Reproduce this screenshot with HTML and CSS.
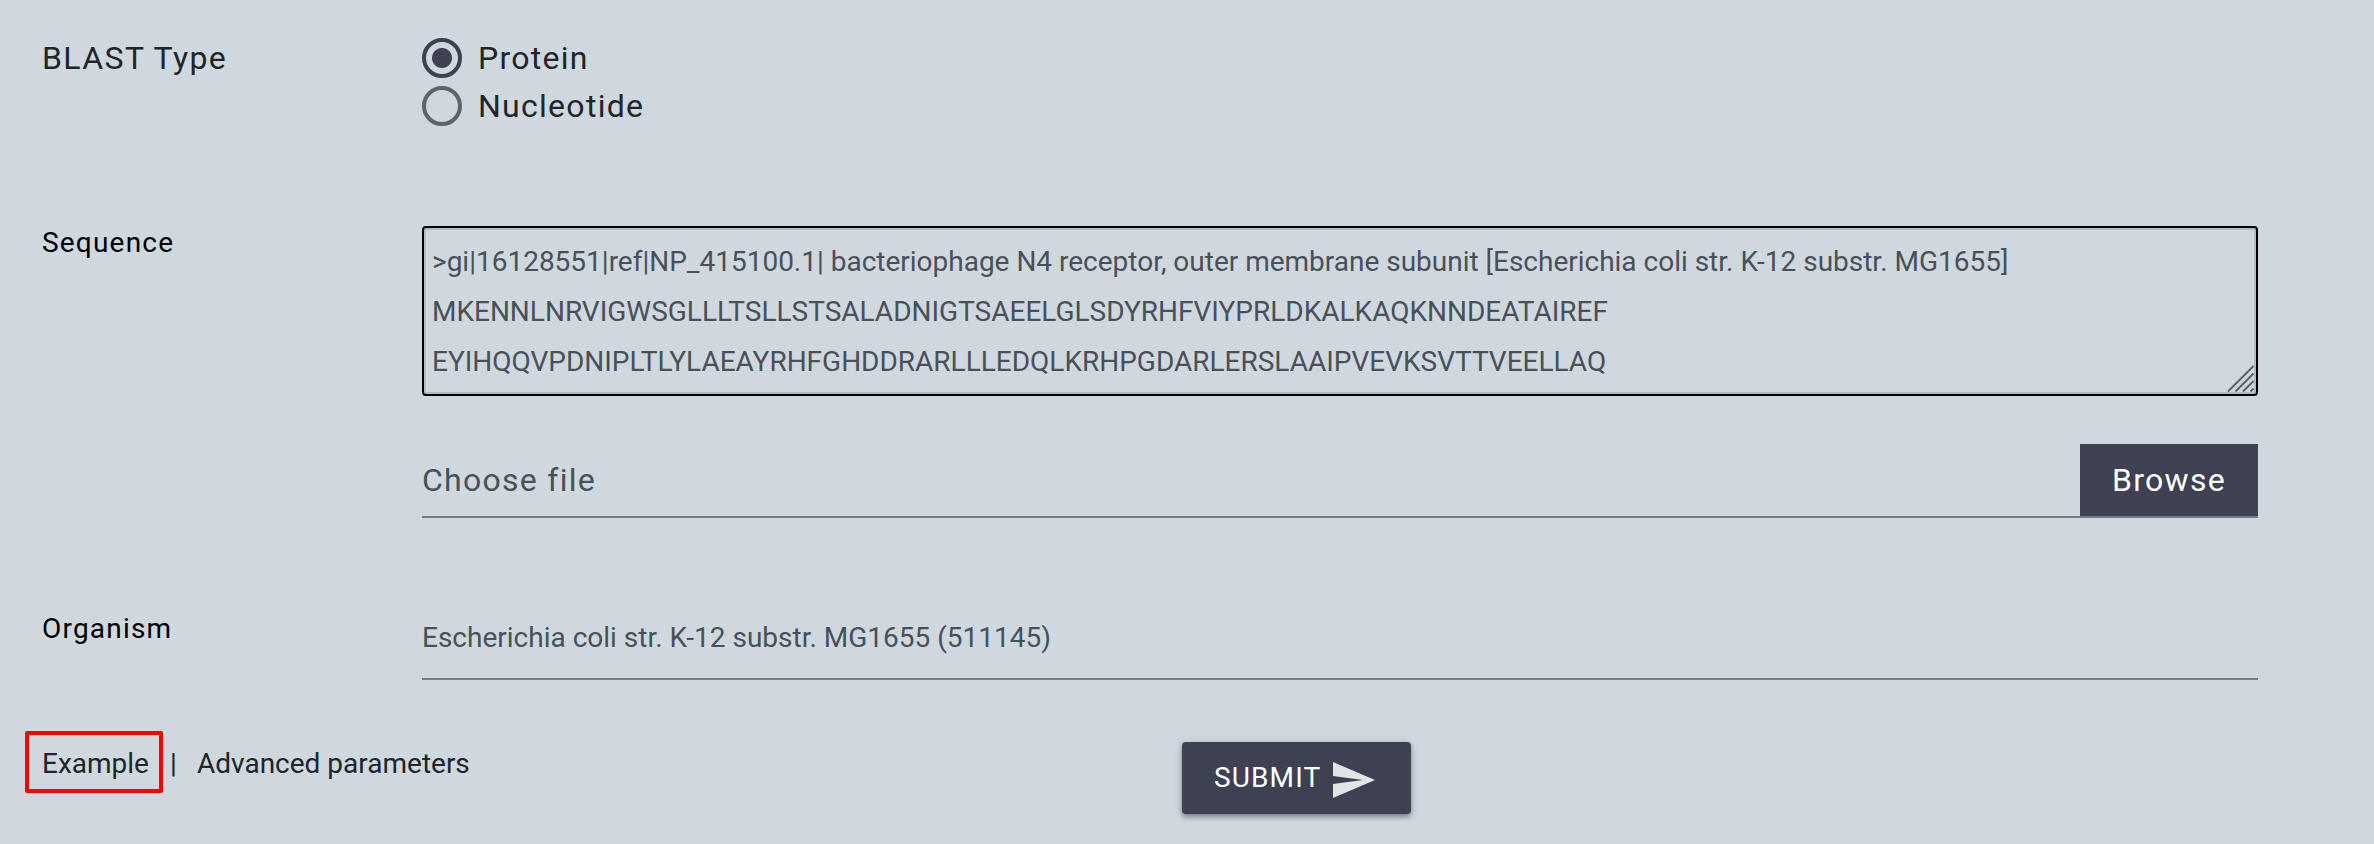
FILE: index.html
```html
<!DOCTYPE html>
<html lang="en">
<head>
<meta charset="utf-8">
<title>BLAST</title>
<link rel="stylesheet" href="styles.css">
</head>
<body>
<form class="form">
  <div class="row row-type">
    <div class="label label-type">BLAST Type</div>
    <div class="radios">
      <label class="option"><span class="radio radio-on"></span>Protein</label>
      <label class="option"><span class="radio"></span>Nucleotide</label>
    </div>
  </div>
  <div class="row row-sequence">
    <div class="label">Sequence</div>
    <div class="field">
      <div class="sequence">
        <div>&gt;gi|16128551|ref|NP_415100.1| bacteriophage N4 receptor, outer membrane subunit [Escherichia coli str. K-12 substr. MG1655]</div>
        <div>MKENNLNRVIGWSGLLLTSLLSTSALADNIGTSAEELGLSDYRHFVIYPRLDKALKAQKNNDEATAIREF</div>
        <div>EYIHQQVPDNIPLTLYLAEAYRHFGHDDRARLLLEDQLKRHPGDARLERSLAAIPVEVKSVTTVEELLAQ</div>
        <svg class="grip" viewBox="0 0 28 28"><path d="M2 27.500L27.500 2M9.500 27.500L27.500 9.500M17 27.500L27.500 17M24.500 27.500L27.500 24.500"/></svg>
      </div>
      <div class="file">
        <span class="file-name">Choose file</span>
        <span class="browse">Browse</span>
      </div>
    </div>
  </div>
  <div class="row row-organism">
    <div class="label">Organism</div>
    <div class="organism">Escherichia coli str. K-12 substr. MG1655 (511145)</div>
  </div>
  <div class="row row-actions">
    <div class="links">
      <a class="link-example">Example</a>
      <span class="divider">|</span>
      <a class="link-advanced">Advanced parameters</a>
    </div>
    <button class="submit" type="button">
      <span>SUBMIT</span>
      <svg class="send" viewBox="0 0 24 24"><path d="M2.010 21L23 12 2.010 3 2 10l15 2-15 2z"/></svg>
    </button>
  </div>
</form>
</body>
</html>
```

FILE: styles.css
```css
* { box-sizing: border-box; }
body {
  margin: 0;
  background: #cfd8df;
  color: #212529;
  font: 28px/50px Roboto, sans-serif;
}
.form { height: 844px; overflow: hidden; }
.row { display: grid; grid-template-columns: 380px 1836px; padding-left: 42px; }
.row-type { height: 226px; padding-top: 34px; }
.label { color: #000; letter-spacing: 1.200px; line-height: 34px; white-space: nowrap; }
.label-type { color: #212529; font-size: 32px; letter-spacing: 1.400px; line-height: 48px; }
.radios { display: flex; flex-direction: column; }
.option { display: flex; align-items: center; height: 48px; gap: 16px; font-size: 32px; letter-spacing: 1.280px; }
.radio {
  width: 40px; height: 40px;
  border: 4px solid #5f6467;
  border-radius: 50%;
}
.radio-on {
  border-color: #3d4152;
  background: radial-gradient(circle, #3d4152 9.500px, transparent 10.500px);
}
.row-sequence { height: 376px; }
.sequence {
  position: relative;
  height: 170px;
  padding: 9px 6px 0;
  border: 2px solid #000;
  border-radius: 4px;
  box-shadow: inset 0 0 0 2px #b2bcbd;
  color: #495057;
  letter-spacing: -.008px;
  white-space: nowrap;
}
.sequence div { padding-left: 2px; }
.grip { position: absolute; right: 2px; bottom: 2px; width: 28px; height: 28px; fill: none; stroke: #5c6366; stroke-width: 2; }
.file {
  display: flex;
  justify-content: space-between;
  height: 74px;
  margin-top: 48px;
  border-bottom: 2px solid #757c80;
  color: #495057;
  font-size: 32px;
  letter-spacing: 1.280px;
  line-height: 72px;
}
.browse { width: 178px; background: #3d4152; color: #fff; padding-left: 32px; }
.row-organism { height: 129px; }
.row-organism .label { padding-top: 10px; }
.organism { height: 78px; padding-top: 11px; border-bottom: 2px solid #757c80; color: #495057; }
.row-actions { grid-template-columns: 1157px 229px; padding-left: 25px; }
.links { display: flex; line-height: 58px; }
.link-example { width: 138px; height: 62px; border: 4px solid #f00; border-radius: 2px; padding-left: 13px; }
.divider { margin-left: 7px; padding-top: 4px; width: 27px; }
.link-advanced { padding-top: 4px; }
.submit {
  display: flex;
  align-items: center;
  height: 72px;
  margin-top: 11px;
  padding: 0 0 0 32px;
  border: 0;
  border-radius: 4px;
  background: #3d4152;
  box-shadow: 0 3px 5px rgba(0,0,0,.35), 0 1px 10px rgba(0,0,0,.12);
  color: #fff;
  font: inherit;
  letter-spacing: 1.120px;
}
.send { width: 48px; height: 48px; margin: 4px 0 0 8px; fill: #e3e4e6; }
```
